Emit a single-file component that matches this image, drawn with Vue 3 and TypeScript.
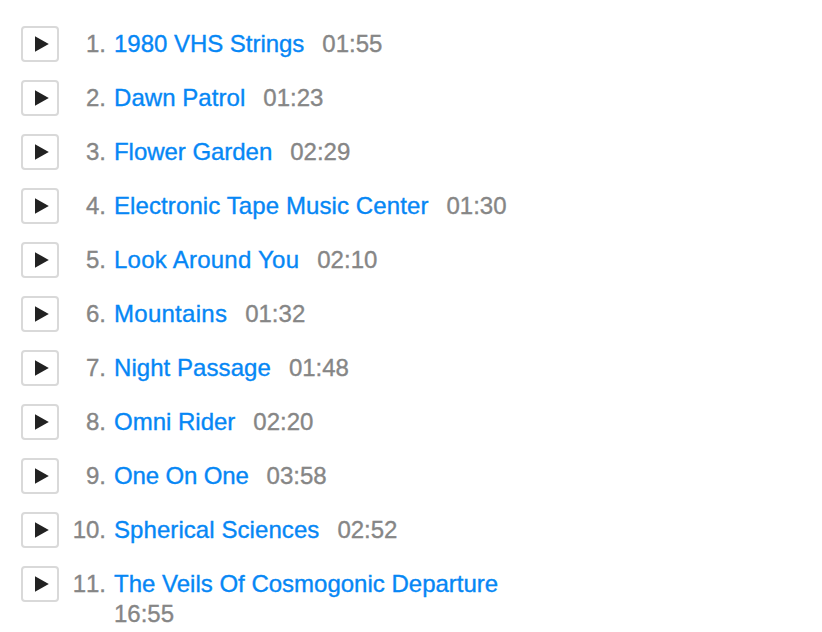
<script setup lang="ts">
interface Track { title: string; time: string; tracking: number }

const tracks: Track[] = [
  { title: '1980 VHS Strings', time: '01:55', tracking: -0.03 },
  { title: 'Dawn Patrol', time: '01:23', tracking: 0.05 },
  { title: 'Flower Garden', time: '02:29', tracking: -0.04 },
  { title: 'Electronic Tape Music Center', time: '01:30', tracking: 0.1 },
  { title: 'Look Around You', time: '02:10', tracking: 0.25 },
  { title: 'Mountains', time: '01:32', tracking: 0.27 },
  { title: 'Night Passage', time: '01:48', tracking: 0.06 },
  { title: 'Omni Rider', time: '02:20', tracking: 0 },
  { title: 'One On One', time: '03:58', tracking: -0.15 },
  { title: 'Spherical Sciences', time: '02:52', tracking: 0.07 },
  { title: 'The Veils Of Cosmogonic Departure', time: '16:55', tracking: 0 },
]
</script>

<template>
  <ol class="tracks">
    <li v-for="(track, i) in tracks" :key="track.title" class="track">
      <button class="play" type="button">
        <svg width="14" height="16" viewBox="0 0 14 16"><path d="M0 0.2 L13.8 8 L0 15.8 Z" /></svg>
      </button>
      <span class="num">{{ i + 1 }}.</span>
      <div class="info">
        <a class="title" :style="{ letterSpacing: `${track.tracking}px` }">{{ track.title }}</a>
        <span class="time">{{ track.time }}</span>
      </div>
    </li>
  </ol>
</template>

<style>
body { background: #fff; }
</style>
<style scoped>
.tracks { box-sizing: border-box; height: 632px; overflow: hidden; margin: 0; padding: 26px 0 0 21px; list-style: none; font: 24px/30px "Liberation Sans", Arial, sans-serif; color: #868686; -webkit-text-stroke: 0.35px currentColor; }
.track { display: flex; height: 54px; align-items: flex-start; }
.play { box-sizing: border-box; width: 38px; height: 36px; padding: 0 0 0 12px; border: 2px solid #d9d9d9; border-radius: 4px; background: #fff; display: flex; align-items: center; flex: none; }
.play svg { fill: #222; flex: none; }
.num { width: 47px; text-align: right; padding-top: 3px; font-kerning: none; }
.info { display: flex; flex-wrap: wrap; column-gap: 18px; width: 400px; margin-left: 8px; padding-top: 3px; }
.title { color: #0687f5; white-space: nowrap; }
</style>
